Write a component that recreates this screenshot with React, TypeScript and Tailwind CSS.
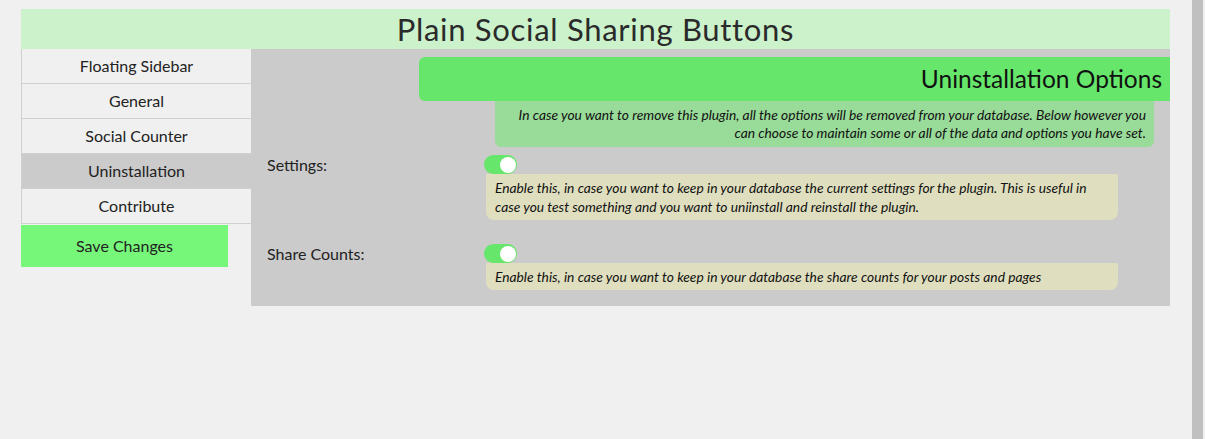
import React from "react";

const tabs = [
  { label: "Floating Sidebar", active: false },
  { label: "General", active: false },
  { label: "Social Counter", active: false },
  { label: "Uninstallation", active: true },
  { label: "Contribute", active: false },
];

const options = [
  {
    label: "Settings:",
    help:
      "Enable this, in case you want to keep in your database the current settings for the plugin. This is useful in case you test something and you want to uniinstall and reinstall the plugin.",
  },
  {
    label: "Share Counts:",
    help: "Enable this, in case you want to keep in your database the share counts for your posts and pages",
  },
];

function Toggle() {
  return (
    <div className="flex h-[19px] w-[33px] items-center justify-end rounded-full bg-[#66e66a] pr-[1px]">
      <div className="h-[16px] w-[16px] rounded-full bg-white" />
    </div>
  );
}

export default function App() {
  return (
    <div
      className="flex h-[439px] bg-[#f0f0f0] text-[#222]"
      style={{ fontFamily: '"Lato", "Noto Sans", sans-serif' }}
    >
      <div className="w-[1192px] pl-[21px] pr-[22px] pt-[9px]">
        {/* Header */}
        <div className="flex h-[40px] items-center justify-center bg-[#ccf2cc]">
          <h1 className="text-[31px] leading-none tracking-[0.7px] text-[#2a2a2a]">Plain Social Sharing Buttons</h1>
        </div>

        <div className="flex">
          {/* Tabs */}
          <div className="w-[230px]">
            <ul className="border-l border-[#d0d0d0]">
              {tabs.map((tab) => (
                <li
                  key={tab.label}
                  className={`flex h-[35px] items-center justify-center border-b border-[#d0d0d0] text-[16px] ${
                    tab.active ? "bg-[#cbcbcb]" : "bg-[#f0f0f0]"
                  }`}
                >
                  {tab.label}
                </li>
              ))}
            </ul>
            <button className="mt-[1px] h-[42px] w-[207px] bg-[#77f77a] text-[16px]">Save Changes</button>
          </div>

          {/* Panel */}
          <div className="flex-1 bg-[#cbcbcb] pb-[16px] pt-[8px]">
            <div className="ml-[168px] flex h-[44px] items-center justify-end rounded-l-[6px] bg-[#66e66a] pr-[8px]">
              <h2 className="text-[24.5px] text-[#111]">Uninstallation Options</h2>
            </div>
            <p className="ml-[244px] mr-[16px] h-[46px] rounded-b-[6px] bg-[#99db99] px-[8px] pt-[5px] text-right text-[13.8px] italic leading-[18px] text-[#111]">
              In case you want to remove this plugin, all the options will be removed from your database. Below however you
              can choose to maintain some or all of the data and options you have set.
            </p>

            <div className="mt-[8px] flex flex-col gap-[24px] pl-[16px]">
              {options.map((opt) => (
                <div key={opt.label} className="flex">
                  <div className="w-[217px] text-[16px] leading-[19px]">{opt.label}</div>
                  <div className="w-[634px]">
                    <Toggle />
                    <div className="ml-[2px] rounded-b-[8px] rounded-tr-[2px] bg-[#dfdfbf] px-[9px] py-[4px] text-[13.8px] italic leading-[19px] text-[#111]">
                      {opt.help}
                    </div>
                  </div>
                </div>
              ))}
            </div>
          </div>
        </div>
      </div>
      <div className="w-[11px] bg-[#c0c0c0]" />
    </div>
  );
}
